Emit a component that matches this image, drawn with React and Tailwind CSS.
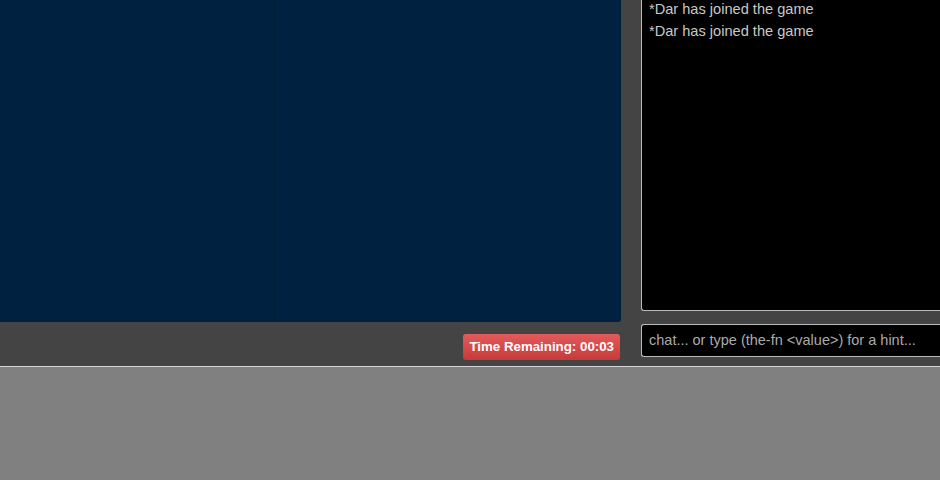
export default function App() {
  const messages = ["*Dar has joined the game", "*Dar has joined the game"];

  return (
    <div className="h-[480px] w-[940px] overflow-hidden bg-[#808080] font-['Liberation_Sans',Arial,sans-serif]">
      {/* game area */}
      <div className="flex h-[367px] bg-[#444444] border-b border-[#d8d8d8]">
        <div className="flex w-[621px] flex-col">
          <div className="flex h-[322px] rounded-br-[3px] bg-[#002240]">
            <div className="w-[274px]" />
            <div className="w-px bg-[#001c35]" />
          </div>
          <div className="mt-[12px] flex justify-end pr-px">
            <div className="flex h-[26px] items-center rounded-[3px] bg-gradient-to-b from-[#e25a5a] to-[#c73a3a] px-[6px] text-[13.3px] font-bold text-white">
              Time Remaining: 00:03
            </div>
          </div>
        </div>

        {/* chat */}
        <div className="ml-[20px] flex flex-1 flex-col">
          <div className="h-[311px] rounded-bl-[3px] border-b border-l border-[#bbbbbb] bg-black px-[7px] text-[14.6px] text-[#c8c8c8]">
            {messages.map((m, i) => (
              <div key={i} className="h-[22px] leading-[18px]">{m}</div>
            ))}
          </div>
          <div className="mt-[13px] flex h-[33px] items-center rounded-l-[3px] border-y border-l border-[#bbbbbb] bg-black px-[7px] text-[14.5px] text-[#aaaaaa]">
            chat... or type (the-fn &lt;value&gt;) for a hint...
          </div>
        </div>
      </div>
    </div>
  );
}
